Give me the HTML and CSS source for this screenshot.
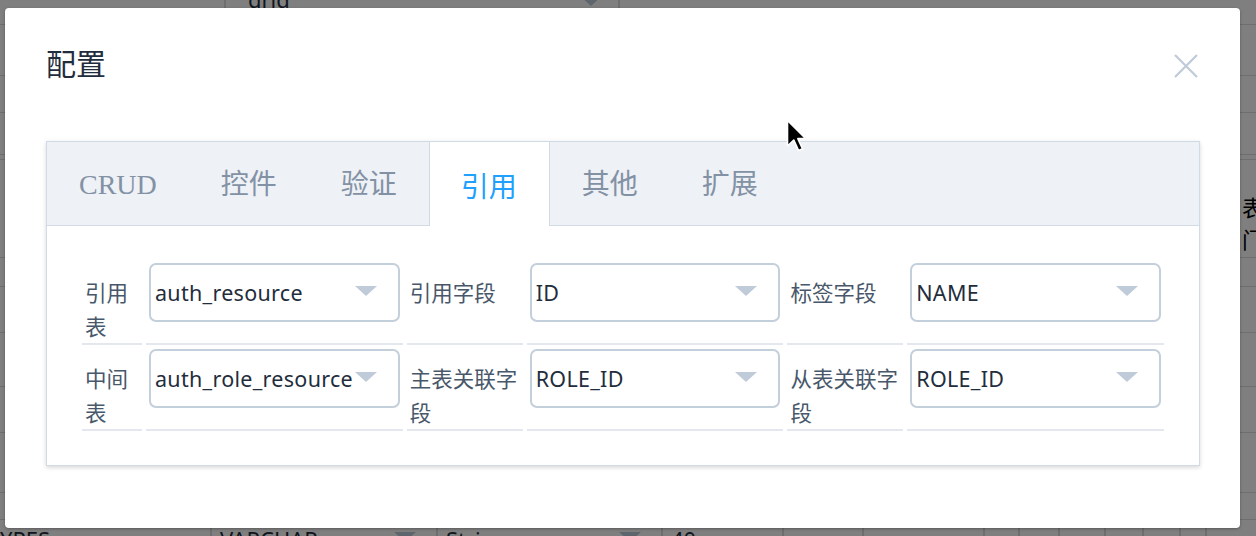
FILE: index.html
```html
<!DOCTYPE html>
<html lang="zh-CN">
<head>
<meta charset="utf-8">
<title>配置</title>
<link rel="stylesheet" href="styles.css">
</head>
<body>
<div class="bg">
  <div class="bgrow h25">
    <div class="bgcell w226"></div>
    <div class="bgcell w394"><span class="bgtext up">grid</span><span class="bgarrow up"></span></div>
    <div class="bgcell grow"></div>
  </div>
  <div class="bgrow h51"></div>
  <div class="bgrow h37"></div>
  <div class="bgrow h42"></div>
  <div class="bgrow h5"></div>
  <div class="bgrow h98">
    <div class="bgcell grow"></div>
    <div class="bgcell side"><span class="sidetext">表<br>门</span></div>
  </div>
  <div class="bgrow h29"></div>
  <div class="bgrow h46"></div>
  <div class="bgrow h54"></div>
  <div class="bgrow h46"></div>
  <div class="bgrow h60"></div>
  <div class="bgrow h27"></div>
  <div class="bgrow last">
    <div class="bgcell b212"><span class="bgtext">YPES</span></div>
    <div class="bgcell b226"><span class="bgtext">VARCHAR</span><span class="bgarrow"></span></div>
    <div class="bgcell b225"><span class="bgtext">String</span><span class="bgarrow"></span></div>
    <div class="bgcell b121"><span class="bgtext">40</span></div>
    <div class="bgcell b80"></div>
    <div class="bgcell b121"></div>
    <div class="bgcell b35"></div>
    <div class="bgcell b40"></div>
    <div class="bgcell b46"></div>
    <div class="bgcell b38"></div>
    <div class="bgcell b37"></div>
    <div class="bgcell b26"></div>
    <div class="bgcell grow"></div>
  </div>
</div>
<div class="mask"></div>

<div class="dialog">
  <div class="dialog-header">
    <span class="dialog-title">配置</span>
    <button class="dialog-close" aria-label="关闭">
      <svg width="24" height="24" viewBox="0 0 24 24"><path d="M1 1 L23 23 M23 1 L1 23" stroke="#bfcbd9" stroke-width="2.2" fill="none"/></svg>
    </button>
  </div>
  <div class="dialog-body">
    <div class="tabs">
      <div class="tabs-header">
        <div class="tab">CRUD</div>
        <div class="tab">控件</div>
        <div class="tab">验证</div>
        <div class="tab active">引用</div>
        <div class="tab">其他</div>
        <div class="tab">扩展</div>
      </div>
      <div class="tabs-content">
        <table class="form-table">
          <colgroup>
            <col class="c-l1"><col class="c-in"><col class="c-l2"><col class="c-in"><col class="c-l2"><col class="c-in3">
          </colgroup>
          <tbody>
            <tr>
              <td class="lbl">引用表</td>
              <td class="fld"><div class="select"><span class="val">auth_resource</span><span class="caret"></span></div></td>
              <td class="lbl">引用字段</td>
              <td class="fld"><div class="select"><span class="val">ID</span><span class="caret"></span></div></td>
              <td class="lbl">标签字段</td>
              <td class="fld"><div class="select"><span class="val">NAME</span><span class="caret"></span></div></td>
            </tr>
            <tr>
              <td class="lbl">中间表</td>
              <td class="fld"><div class="select"><span class="val">auth_role_resource</span><span class="caret"></span></div></td>
              <td class="lbl">主表关联字段</td>
              <td class="fld"><div class="select"><span class="val">ROLE_ID</span><span class="caret"></span></div></td>
              <td class="lbl">从表关联字段</td>
              <td class="fld"><div class="select"><span class="val">ROLE_ID</span><span class="caret"></span></div></td>
            </tr>
          </tbody>
        </table>
      </div>
    </div>
  </div>
</div>

<svg class="cursor" width="22" height="34" viewBox="0 0 22 34"><path d="M1.5 1.5 L1.5 27 L7.8 21 L12.6 31.5 L16.6 29.8 L11.8 19.6 L19.8 19.6 Z" fill="#000" stroke="#fff" stroke-width="1.6" stroke-linejoin="round"/></svg>
</body>
</html>
```
FILE: styles.css
```css
* { box-sizing: border-box; }
html, body { margin: 0; padding: 0; }
body {
  width: 1256px;
  height: 536px;
  overflow: hidden;
  position: relative;
  background: #fff;
  font-family: "Noto Sans", "Noto Sans CJK SC", sans-serif;
}

/* background page */
.bg { width: 1256px; }
.bgrow { display: flex; border-bottom: 1px solid #dcdcdc; }
.h25 { height: 25px; }
.h51 { height: 51px; }
.h37 { height: 37px; }
.h42 { height: 42px; }
.h5 { height: 5px; }
.h98 { height: 98px; }
.h29 { height: 29px; }
.h46 { height: 46px; }
.h54 { height: 54px; }
.h60 { height: 60px; }
.h27 { height: 27px; }
.last { height: 40px; border-bottom: 0; }
.bgcell { position: relative; border-right: 2px solid #dcdcdc; overflow: hidden; }
.grow { flex: 1; border-right: 0; }
.w226 { width: 226px; }
.w394 { width: 394px; }
.b212 { width: 212px; }
.b226 { width: 226px; }
.b225 { width: 225px; }
.b121 { width: 121px; }
.b80 { width: 80px; }
.b35 { width: 35px; }
.b40 { width: 40px; }
.b46 { width: 46px; }
.b38 { width: 38px; }
.b37 { width: 37px; }
.b26 { width: 26px; }
.side { width: 14px; border-right: 0; overflow: hidden; }
.sidetext { display: block; padding-top: 30px; font: 22px/32px "Noto Sans CJK SC", sans-serif; color: #000; white-space: nowrap; }
.bgtext { display: block; padding: 6px 0 0 8px; font: 22px/26px "Noto Sans", sans-serif; color: #1f2d3d; }
.bgtext.up { padding-top: 0; margin-top: -14px; margin-left: 14px; }
.b212 .bgtext { padding-left: 0; }
.bgarrow {
  position: absolute; right: 20px; top: 12px;
  border-left: 11px solid transparent; border-right: 11px solid transparent;
  border-top: 10px solid #bfcbd9;
}
.bgarrow.up { top: -4px; right: 16px; }

.mask { position: absolute; inset: 0; background: rgba(0, 0, 0, 0.5); }

/* dialog */
.dialog {
  position: absolute;
  left: 5px;
  top: 8px;
  width: 1235px;
  height: 520px;
  background: #fff;
  border-radius: 4px;
  box-shadow: 0 1px 3px rgba(0, 0, 0, 0.3);
}
.dialog-header {
  display: flex;
  justify-content: space-between;
  align-items: center;
  padding: 42px 42px 0 42px;
  height: 104px;
}
.dialog-title {
  font: 30px/32px "Liberation Serif", "Noto Sans CJK SC", serif;
  color: #1f2d3d;
  margin-top: -32px;
  margin-left: -1px;
}
.dialog-close {
  border: 0;
  background: transparent;
  padding: 0;
  width: 24px;
  height: 24px;
  margin-top: -30px;
  margin-right: 0;
}
.dialog-close svg { display: block; }
.dialog-body { padding: 29px 40px 0 41px; }

/* tabs */
.tabs {
  border: 1px solid #d1dbe5;
  background: #fff;
  box-shadow: 0 2px 4px rgba(0, 0, 0, 0.12), 0 0 6px rgba(0, 0, 0, 0.04);
}
.tabs-header {
  display: flex;
  height: 84px;
  background: #eef1f6;
  border-bottom: 1px solid #d1dbe5;
}
.tab {
  height: 84px;
  padding: 2px 31px 0 31px;
  border-left: 1px solid transparent;
  border-right: 1px solid transparent;
  font: 28px/82px "Liberation Serif", "Noto Sans CJK SC", serif;
  color: #8391a5;
}
.tab.active {
  background: #fff;
  color: #20a0ff;
  border-left-color: #d1dbe5;
  border-right-color: #d1dbe5;
  margin-bottom: -1px;
  height: 84px;
  padding-right: 32px;
  font-family: "Noto Sans CJK SC", sans-serif;
}
.tabs-content { padding: 33px 31px 34px 31px; }

/* form table */
.form-table {
  border-collapse: separate;
  border-spacing: 4px 0;
  table-layout: fixed;
}
.c-l1 { width: 60px; }
.c-l2 { width: 116px; }
.c-in { width: 257px; }
.c-in3 { width: 257px; }
.form-table td {
  vertical-align: top;
  border-bottom: 2px solid #e4e8ee;
  padding: 0;
}
.lbl {
  padding: 16px 3px 0 3px !important;
  font: 21.5px/34px "Noto Sans CJK SC", sans-serif;
  color: #48576a;
  word-break: break-all;
}
.fld { padding: 4px 3px 20px 3px !important; }
.select {
  position: relative;
  height: 59px;
  border: 2px solid #c4cfdc;
  border-radius: 7px;
  background: #fff;
  display: flex;
  align-items: center;
  padding-left: 4px;
}
.val {
  font: 21.5px/26px "Noto Sans", sans-serif;
  letter-spacing: 0.3px;
  color: #1f2d3d;
  white-space: nowrap;
  margin-top: 1px;
}
.caret {
  position: absolute;
  right: 21px;
  top: 21px;
  width: 0;
  height: 0;
  border-left: 11px solid transparent;
  border-right: 11px solid transparent;
  border-top: 10px solid #bfcbd9;
}

.cursor { position: absolute; left: 786px; top: 119px; }
```
